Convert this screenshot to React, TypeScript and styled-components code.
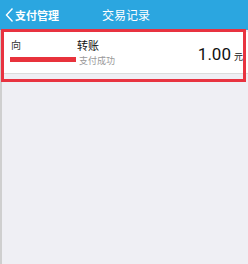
import React from 'react';
import styled, { createGlobalStyle } from 'styled-components';

const GlobalStyle = createGlobalStyle`
  html, body {
    margin: 0;
    padding: 0;
    background: #efeff4;
    font-family: "Noto Sans CJK SC", "Noto Sans", sans-serif;
  }
`;

const Screen = styled.div`
  width: 248px;
  height: 264px;
  background: #efeff4;
  position: relative;
  overflow: hidden;
  display: flex;
  flex-direction: column;
`;

const TopBar = styled.div`
  height: 30px;
  flex: none;
  background: #2ba6e0;
  display: flex;
  align-items: center;
  color: #fff;
  position: relative;
`;

const BackButton = styled.div`
  display: flex;
  align-items: center;
  padding-left: 5px;
  font-size: 11px;
  font-weight: bold;
  gap: 1px;
`;

const Title = styled.div`
  position: absolute;
  left: 102px;
  top: 0;
  line-height: 30px;
  font-size: 12px;
`;

const Body = styled.div`
  flex: 1;
  border-left: 2px solid #cfcfcf;
`;

const Record = styled.div`
  background: #fff;
  margin-top: 2px;
  height: 42px;
  box-sizing: border-box;
  border-bottom: 1px solid #dcdcdc;
  display: flex;
  align-items: flex-start;
  padding: 7px 5px 0 8px;
`;

const LeftCol = styled.div`
  display: flex;
  flex-direction: column;
  width: 66px;
  gap: 6px;
`;

const Small = styled.div`
  font-size: 10px;
  color: #333;
  line-height: 12px;
  padding-left: 1px;
`;

const Masked = styled.div`
  height: 5px;
  background: #e8323c;
  width: 66px;
`;

const MidCol = styled.div`
  display: flex;
  flex-direction: column;
  gap: 3px;
  flex: 1;
`;

const Kind = styled.div`
  font-size: 11px;
  color: #111;
  line-height: 13px;
  padding-left: 1px;
`;

const Status = styled.div`
  font-size: 9px;
  color: #999;
  line-height: 11px;
  padding-left: 3px;
`;

const Amount = styled.div`
  align-self: center;
  margin-top: -4px;
  display: flex;
  align-items: baseline;
  gap: 3px;
  color: #111;
  font-family: Roboto, "Noto Sans", sans-serif;
  font-size: 17px;
`;

const Unit = styled.span`
  font-size: 9px;
  font-family: "Noto Sans CJK SC", sans-serif;
`;

const Highlight = styled.div`
  position: absolute;
  left: 1px;
  top: 29px;
  width: 245px;
  height: 53px;
  border: 3px solid #e83340;
  box-sizing: border-box;
  pointer-events: none;
`;

export default function App() {
  return (
    <>
      <GlobalStyle />
      <Screen>
        <TopBar>
          <BackButton>
            <svg width="9" height="16" viewBox="0 0 9 16">
              <path d="M7.5 1.5 L1.5 8 L7.5 14.5" fill="none" stroke="#fff" strokeWidth="1.4" />
            </svg>
            支付管理
          </BackButton>
          <Title>交易记录</Title>
        </TopBar>
        <Body>
          <Record>
            <LeftCol>
              <Small>向</Small>
              <Masked />
            </LeftCol>
            <MidCol>
              <Kind>转账</Kind>
              <Status>支付成功</Status>
            </MidCol>
            <Amount>
              1.00<Unit>元</Unit>
            </Amount>
          </Record>
        </Body>
        <Highlight />
      </Screen>
    </>
  );
}
